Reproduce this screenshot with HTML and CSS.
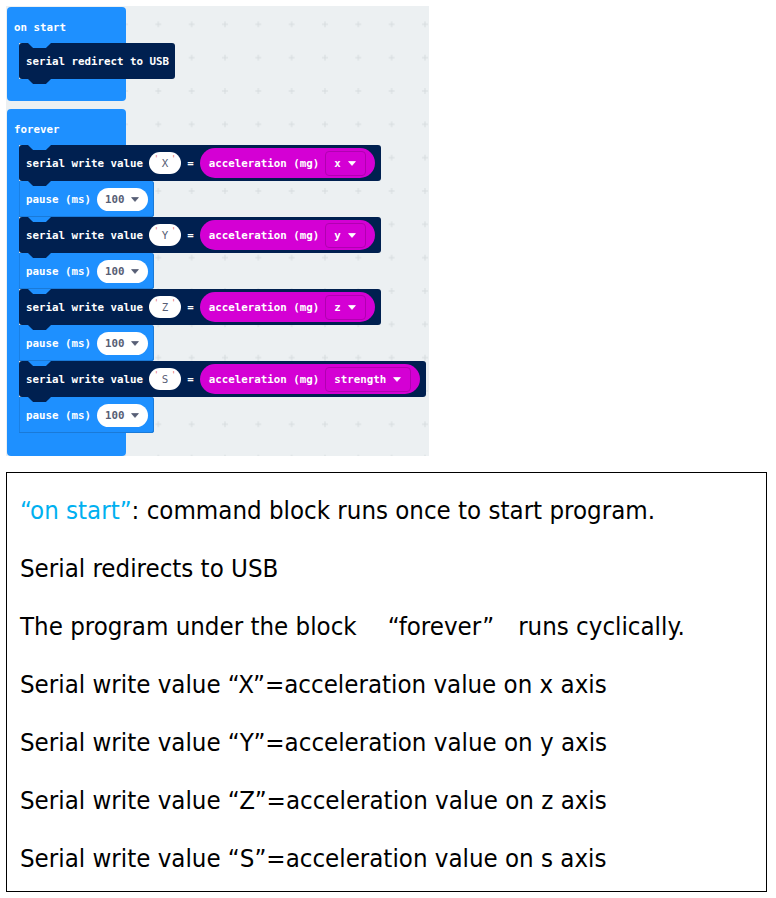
FILE: index.html
```html
<!DOCTYPE html>
<html>
<head>
<meta charset="utf-8">
<link rel="stylesheet" href="styles.css">
</head>
<body>
<div class="canvas">
  <svg class="grid" width="423" height="450" aria-hidden="true">
    <defs>
      <pattern id="plus" width="33.33" height="33.33" patternUnits="userSpaceOnUse" x="2.33" y="1.67">
        <path d="M13.67 16.67h6M16.67 13.67v6" stroke="#d6dbde" stroke-width="1"/>
      </pattern>
    </defs>
    <rect width="423" height="450" fill="url(#plus)"/>
  </svg>

  <div class="stack stack-start">
    <div class="cblock">
      <div class="hat">on start</div>
      <div class="mouth">
        <div class="arm"></div>
        <div class="stmts">
          <div class="blk serial">serial redirect to USB</div>
        </div>
      </div>
      <div class="foot"></div>
    </div>
  </div>

  <div class="stack stack-forever">
    <div class="cblock">
      <div class="hat">forever</div>
      <div class="mouth">
        <div class="arm"></div>
        <div class="stmts">
          <div class="blk serial">
            <span>serial write value</span>
            <span class="str"><i class="q">'</i>X<i class="q">'</i></span>
            <span>=</span>
            <span class="reporter">acceleration (mg)<span class="dd">x<svg class="tri" width="8" height="5" viewBox="0 0 8 5"><path d="M0.6 0.6h6.8L4 4.4z" fill="currentColor" stroke="currentColor" stroke-width="0.8" stroke-linejoin="round"/></svg></span></span>
          </div>
          <div class="blk pause">
            <span>pause (ms)</span>
            <span class="num">100<svg class="tri" width="8" height="5" viewBox="0 0 8 5"><path d="M0.6 0.6h6.8L4 4.4z" fill="currentColor" stroke="currentColor" stroke-width="0.8" stroke-linejoin="round"/></svg></span>
          </div>
          <div class="blk serial">
            <span>serial write value</span>
            <span class="str"><i class="q">'</i>Y<i class="q">'</i></span>
            <span>=</span>
            <span class="reporter">acceleration (mg)<span class="dd">y<svg class="tri" width="8" height="5" viewBox="0 0 8 5"><path d="M0.6 0.6h6.8L4 4.4z" fill="currentColor" stroke="currentColor" stroke-width="0.8" stroke-linejoin="round"/></svg></span></span>
          </div>
          <div class="blk pause">
            <span>pause (ms)</span>
            <span class="num">100<svg class="tri" width="8" height="5" viewBox="0 0 8 5"><path d="M0.6 0.6h6.8L4 4.4z" fill="currentColor" stroke="currentColor" stroke-width="0.8" stroke-linejoin="round"/></svg></span>
          </div>
          <div class="blk serial">
            <span>serial write value</span>
            <span class="str"><i class="q">'</i>Z<i class="q">'</i></span>
            <span>=</span>
            <span class="reporter">acceleration (mg)<span class="dd">z<svg class="tri" width="8" height="5" viewBox="0 0 8 5"><path d="M0.6 0.6h6.8L4 4.4z" fill="currentColor" stroke="currentColor" stroke-width="0.8" stroke-linejoin="round"/></svg></span></span>
          </div>
          <div class="blk pause">
            <span>pause (ms)</span>
            <span class="num">100<svg class="tri" width="8" height="5" viewBox="0 0 8 5"><path d="M0.6 0.6h6.8L4 4.4z" fill="currentColor" stroke="currentColor" stroke-width="0.8" stroke-linejoin="round"/></svg></span>
          </div>
          <div class="blk serial">
            <span>serial write value</span>
            <span class="str"><i class="q">'</i>S<i class="q">'</i></span>
            <span>=</span>
            <span class="reporter">acceleration (mg)<span class="dd">strength<svg class="tri" width="8" height="5" viewBox="0 0 8 5"><path d="M0.6 0.6h6.8L4 4.4z" fill="currentColor" stroke="currentColor" stroke-width="0.8" stroke-linejoin="round"/></svg></span></span>
          </div>
          <div class="blk pause">
            <span>pause (ms)</span>
            <span class="num">100<svg class="tri" width="8" height="5" viewBox="0 0 8 5"><path d="M0.6 0.6h6.8L4 4.4z" fill="currentColor" stroke="currentColor" stroke-width="0.8" stroke-linejoin="round"/></svg></span>
          </div>
        </div>
      </div>
      <div class="foot"></div>
    </div>
  </div>
</div>

<div class="notes">
  <p><span class="hl">“on start”</span>: command block runs once to start program.</p>
  <p>Serial redirects to USB</p>
  <p>The program under the block<span class="sp"></span>“forever”<span class="sp sp-2"></span>runs cyclically.</p>
  <p>Serial write value “X”=acceleration value on x axis</p>
  <p>Serial write value “Y”=acceleration value on y axis</p>
  <p>Serial write value “Z”=acceleration value on z axis</p>
  <p>Serial write value “S”=acceleration value on s axis</p>
</div>
</body>
</html>
```
FILE: styles.css
```css
html, body {
  margin: 0;
  background: #ffffff;
}
body {
  padding: 6px 0 0 6px;
}

/* ---------- block canvas ---------- */
.canvas {
  position: relative;
  width: 423px;
  height: 450px;
  background: #ecf0f2;
  overflow: hidden;
}
.grid {
  position: absolute;
  left: 0;
  top: 0;
}
.stack {
  position: absolute;
  left: 1px;
}
.stack-start { top: 1px; }
.stack-forever { top: 103px; }

.cblock {
  display: flex;
  flex-direction: column;
  align-items: flex-start;
  font-family: "DejaVu Sans Mono", monospace;
  font-weight: bold;
  font-size: 10.8px;
  color: #ffffff;
}
.hat {
  position: relative;
  width: 119px;
  height: 36px;
  line-height: 30px;
  box-sizing: border-box;
  padding: 6px 0 0 7px;
  background: #1e90ff;
  border-radius: 4px 4px 0 0;
}
.hat::after {
  content: "";
  position: absolute;
  left: 21px;
  bottom: -5px;
  width: 23px;
  height: 5px;
  background: #1e90ff;
  clip-path: polygon(0 0, 100% 0, 78% 100%, 22% 100%);
  z-index: 1;
}
.mouth {
  display: flex;
}
.arm {
  width: 12px;
  background: #1e90ff;
}
.stmts {
  display: flex;
  flex-direction: column;
  align-items: flex-start;
}
.foot {
  width: 119px;
  height: 23px;
  background: #1e90ff;
  border-radius: 0 0 4px 4px;
}
.stack-start .foot { height: 22px; }

.blk {
  position: relative;
  display: flex;
  align-items: center;
  gap: 6px;
  height: 36px;
  box-sizing: border-box;
  padding: 0 6px 0 7px;
  white-space: nowrap;
}
.blk::after {
  content: "";
  position: absolute;
  left: 9px;
  bottom: -5px;
  width: 23px;
  height: 5px;
  background: inherit;
  clip-path: polygon(0 0, 100% 0, 78% 100%, 22% 100%);
  z-index: 1;
}
.serial {
  background: #002050;
  border-radius: 3px;
}
.pause {
  background: #1e90ff;
  border-radius: 0 3px 3px 0;
  box-shadow: inset -1px 0 0 #1a7ad8, inset 0 -1px 0 #1a7ad8, inset 1px 0 0 #1a80e4;
}
.str {
  display: flex;
  align-items: center;
  gap: 3px;
  height: 22px;
  padding: 0 5px;
  background: #ffffff;
  border-radius: 11px;
  color: #575e75;
  font-weight: normal;
}
.q {
  font-style: normal;
  font-size: 8px;
  color: #e36a6a;
  align-self: flex-start;
  margin-top: 3px;
}
.reporter {
  display: flex;
  align-items: center;
  gap: 6px;
  height: 30px;
  padding: 0 9px;
  background: #d400d4;
  border-radius: 15px;
}
.dd {
  display: flex;
  align-items: center;
  gap: 7px;
  height: 25px;
  box-sizing: border-box;
  padding: 0 9px 0 8px;
  border: 1px solid #b100b1;
  border-radius: 4px;
}
.num {
  display: flex;
  align-items: center;
  gap: 6px;
  height: 23px;
  padding: 0 9px 0 8px;
  background: #ffffff;
  border-radius: 12px;
  color: #575e75;
}
.tri {
  display: block;
}

/* ---------- notes box ---------- */
.notes {
  width: 761px;
  height: 420px;
  box-sizing: border-box;
  margin-top: 16px;
  border: 1px solid #000000;
  padding: 8px 0 0 13px;
  font-family: "DejaVu Sans Condensed", "DejaVu Sans", sans-serif;
  font-stretch: condensed;
  font-size: 25.6px;
  color: #000000;
}
.notes p {
  margin: 0;
  height: 58px;
  line-height: 58px;
  white-space: nowrap;
}
.hl {
  color: #00b0f0;
}
.sp {
  display: inline-block;
  width: 31px;
}
.sp-2 {
  width: 24px;
}
```
